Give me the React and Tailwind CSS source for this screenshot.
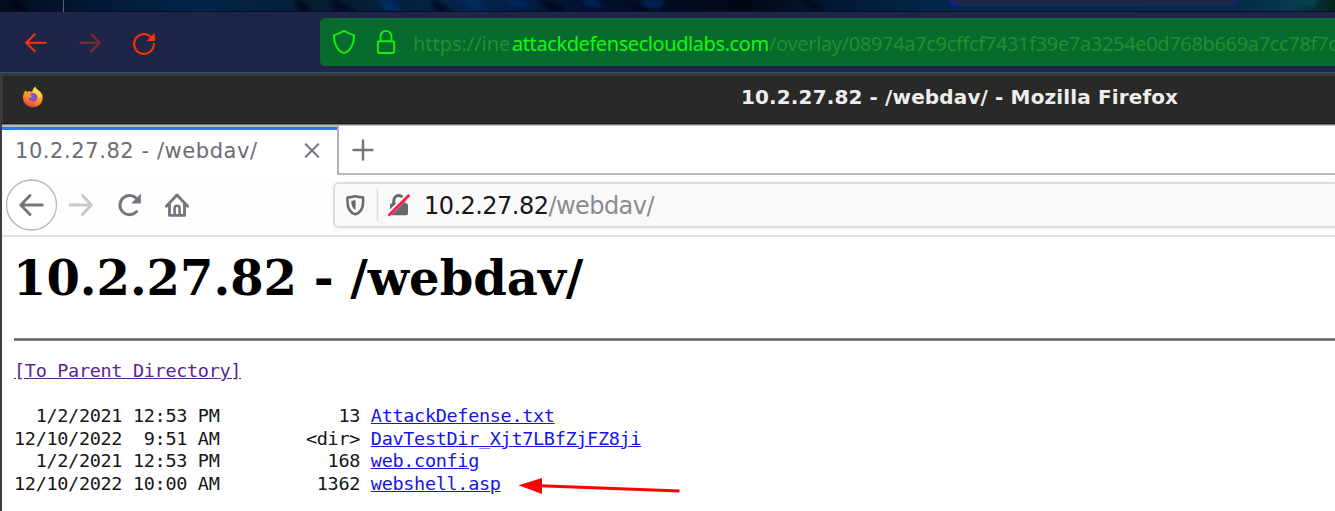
import React from "react";

const rows = [
  ["  1/2/2021 12:53 PM           13 ", "AttackDefense.txt"],
  ["12/10/2022  9:51 AM        <dir> ", "DavTestDir_Xjt7LBfZjFZ8ji"],
  ["  1/2/2021 12:53 PM          168 ", "web.config"],
  ["12/10/2022 10:00 AM         1362 ", "webshell.asp"],
];

function Wallpaper() {
  return (
    <svg width="1335" height="12" viewBox="0 0 1335 12" className="absolute inset-0" preserveAspectRatio="none">
      <defs>
        <linearGradient id="wall">
          <stop offset="0" stopColor="#020b1c" />
          <stop offset="0.07" stopColor="#031a35" />
          <stop offset="0.15" stopColor="#03244a" />
          <stop offset="0.25" stopColor="#051d32" />
          <stop offset="0.36" stopColor="#04244d" />
          <stop offset="0.46" stopColor="#010e28" />
          <stop offset="0.56" stopColor="#010714" />
          <stop offset="0.63" stopColor="#031a38" />
          <stop offset="0.7" stopColor="#02264a" />
          <stop offset="0.93" stopColor="#052b45" />
          <stop offset="0.97" stopColor="#073a4c" />
          <stop offset="1" stopColor="#03231e" />
        </linearGradient>
        <filter id="soft"><feGaussianBlur stdDeviation="2" /></filter>
      </defs>
      <rect width="1335" height="12" fill="url(#wall)" />
      <g filter="url(#soft)">
        <path d="M8 0h9l12 12h-12zM293 0h10l9 12h-12zM330 0h6l22 12h-20zM430 0h8l14 12h-16zM540 0h12l15 12h-18zM645 0h12l-10 12h-16zM800 0h10l16 12h-8z" fill="#010812" opacity="0.7" />
        <path d="M375 0h18l10 12h-15zM455 0h20l12 9-14-3zM505 0h16l10 7-15-1zM580 0h14l12 7-16-1zM640 0h26l-8 9-13-3z" fill="#06337c" opacity="0.65" />
        <path d="M1295 0h25l-8 6z" fill="#08566a" opacity="0.7" />
      </g>
      <path d="M0 11.5h1335" stroke="#041026" />
    </svg>
  );
}

function FirefoxLogo() {
  return (
    <svg width="22" height="22" viewBox="0 0 22 22">
      <defs>
        <linearGradient id="fire" x1="0.8" y1="0" x2="0.35" y2="1">
          <stop offset="0" stopColor="#ffe84a" />
          <stop offset="0.4" stopColor="#ffad2d" />
          <stop offset="0.75" stopColor="#ff7126" />
          <stop offset="1" stopColor="#f0344e" />
        </linearGradient>
      </defs>
      <path d="M3.4 4.2 4.8 6 7 5.3 10.7 6 C10.8 3.5 12 1.8 13.2 .8 C13.6 3 16.3 4 18 5.5 C20 7.5 21 9.5 20.7 12 C20.3 17.5 16.4 21.3 11 21.3 C5.3 21.3 1 17.2 1 11.6 C1 8.7 2 6.5 3.4 4.2Z" fill="url(#fire)" />
      <path d="M10.2 5.9 C10.5 3.5 12 1.6 13.2 .8 C13.6 3 16.8 4 18 6.5 C19 8.5 18.5 11 17.5 12.5 C16.5 9 14.5 7 10.2 7Z" fill="#ffdc44" opacity="0.8" />
      <path d="M7 8.4 C10 5.6 15.3 7.4 15.3 11.5 C15.2 14.8 12.5 16.2 10 15.6 C7.6 15 6.4 13.2 6.6 11.3 C8 12.2 9.4 11.4 9.8 10.3Z" fill="#7b55cf" />
      <path d="M3.6 7.5 C5.7 6 8.2 7.2 9.5 8.7 L7 10.6 C5 10.4 4 9.3 3.6 7.5Z" fill="#ff9830" />
    </svg>
  );
}

function OuterNav() {
  return (
    <div className="flex h-[60px] bg-[#1f2548]">
      <div className="flex w-[320px] shrink-0 items-start">
        <svg width="180" height="60" viewBox="0 12 180 60" fill="none" stroke="#ff3300" strokeWidth="2" strokeLinecap="round" strokeLinejoin="round">
          <path d="M45.7 42.8H26.2M34.8 34.3 26.2 42.8 34.8 51.3" />
          <path d="M80.2 42.8H99.8M91.3 34.3 99.8 42.8 91.3 51.3" stroke="#812a30" />
          <path d="M153.9 43.8A9.9 9.9 0 1 1 149.2 35.6L151.8 38" />
          <path d="M154.4 34.2V40.4H147.8Z" fill="#ff3300" strokeWidth="1.1" />
        </svg>
      </div>
      <div className="mt-[6px] flex h-12 flex-1 overflow-hidden rounded-l-[5px] bg-[#066b2d]">
        <svg className="shrink-0" width="93" height="48" viewBox="320 18 93 48" fill="none" stroke="#13f213" strokeWidth="1.9" strokeLinejoin="round">
          <path d="M344 30.8C340.8 33 337.6 34.5 334 35.1C333.6 43.5 337.5 51.2 344 53.1C350.5 51.2 354.4 43.5 354 35.1C350.4 34.5 347.2 33 344 30.8Z" />
          <rect x="377.8" y="41.2" width="16.4" height="11.8" rx="2" />
          <path d="M380.5 41V36.4a5.5 5.5 0 0 1 11 0V41" />
        </svg>
        <div className="flex pt-px font-['Noto_Sans',sans-serif] text-[20px] leading-[50px] whitespace-pre text-[#1d912d]">
          <span className="w-[99px] tracking-[-0.05px]">https://ine.</span>
          <span className="w-[257px] tracking-[-0.42px] text-[#13f813]">attackdefensecloudlabs.com</span>
          <span className="tracking-[-0.34px]">/overlay/08974a7c9cffcf7431f39e7a3254e0d768b669a7cc78f7c</span>
        </div>
      </div>
    </div>
  );
}

function TitleBar() {
  return (
    <div className="flex h-[51px] items-center border-t-[3px] border-b border-l-[3px] border-t-[#383836] border-b-[#1c1c1b] border-l-[#3b3b39] bg-[#292927] pb-[5px]">
      <div className="ml-[19px] w-[719px] shrink-0"><FirefoxLogo /></div>
      <div className="font-['DejaVu_Sans',sans-serif] text-[20px] font-bold tracking-[0.13px] leading-6 whitespace-nowrap text-[#eeeeec]">
        10.2.27.82 - /webdav/ - Mozilla Firefox
      </div>
    </div>
  );
}

function TabStrip() {
  return (
    <div className="flex h-[51px] border-t border-[#777]">
      <div className="flex w-[337px] shrink-0 flex-col border-r-2 border-t-2 border-r-[#b1b1b3] border-t-[#b9b9bb]">
        <div className="h-[3px] bg-[#2b7af5]" />
        <div className="flex flex-1 items-center justify-between pb-[3px]">
          <span className="ml-[13px] font-['DejaVu_Sans',sans-serif] text-[21px] tracking-[0.57px] leading-[26px] whitespace-nowrap text-[#6b6c76]">10.2.27.82 - /webdav/</span>
          <svg className="mr-4" width="18" height="18" viewBox="0 0 18 18" stroke="#72747e" strokeWidth="2" strokeLinecap="round">
            <path d="M2.7 2.2 15.3 14.8M15.3 2.2 2.7 14.8" />
          </svg>
        </div>
      </div>
      <div className="flex-1 border-t border-b-2 border-t-[#c5c5c7] border-b-[#b8b8ba] pt-[13px] pl-[13px]">
        <svg width="22" height="22" viewBox="0 0 22 22" stroke="#747680" strokeWidth="2.5" strokeLinecap="round">
          <path d="M11 1.5v19M1.5 11h19" />
        </svg>
      </div>
    </div>
  );
}

function InnerNav() {
  return (
    <div className="flex h-[62px] border-b-2 border-[#dededf] bg-[#fefefe]">
      <svg className="shrink-0" width="331" height="59" viewBox="2 175 331 59" fill="none" stroke="#737681" strokeWidth="2.9" strokeLinecap="round" strokeLinejoin="round">
        <circle cx="31.5" cy="205" r="25" stroke="#b6b6b9" strokeWidth="1.3" fill="#fff" />
        <path d="M42.3 205H20.8M30 195.6 20.8 205 30 214.4" />
        <path d="M70 205H91.5M82.3 195.6 91.5 205 82.3 214.4" stroke="#c7c8cc" />
        <path d="M137.5 199.7A9.6 9.6 0 1 0 136.6 211.6" />
        <path d="M140.3 195V203H132.3Z" fill="#737681" strokeWidth="1" />
        <path d="M166.3 206.2 177 195 187.7 206.2M169.5 204V215.4H184.5V204" />
        <path d="M174.6 214V208.2a2.5 2.5 0 0 1 5 0V214" strokeWidth="2.6" />
      </svg>
      <div className="mt-[7px] flex h-[46px] flex-1 rounded-l-[6px] border-2 border-r-0 border-[#dedee0] bg-[#f9f9fa] shadow-[0_1px_4px_rgba(0,0,0,0.06)]">
        <svg className="shrink-0" width="89" height="42" viewBox="335 184 89 42" fill="none">
          <path d="M355.3 196.2C352.8 197.2 350 197.4 347.5 197.4V202C347.5 208 350.3 212.7 355.3 214.2C360.3 212.7 363.1 208 363.1 202V197.4C360.6 197.4 357.8 197.2 355.3 196.2Z" stroke="#68686a" strokeWidth="2.5" strokeLinejoin="round" />
          <path d="M355.5 200V210C352.5 208.5 351.2 205 351.2 201Z" fill="#68686a" />
          <path d="M377.5 188.5V221" stroke="#dedee0" strokeWidth="1.5" />
          <path d="M393.8 205V200.5a5 5 0 0 1 10 0V205" stroke="#68686a" strokeWidth="3" />
          <rect x="390" y="203.2" width="18" height="12" rx="2" fill="#68686a" />
          <path d="M388.7 214.2 408 195" stroke="#f9f9fa" strokeWidth="5" />
          <path d="M389.5 214.8 408.5 195.8" stroke="#ff1748" strokeWidth="2.9" strokeLinecap="round" />
        </svg>
        <div className="pt-px font-['DejaVu_Sans',sans-serif] text-[24px] tracking-[-0.54px] leading-[42px] whitespace-nowrap text-[#8c8c8e]">
          <span className="text-[#17171a]">10.2.27.82</span>/webdav/
        </div>
      </div>
    </div>
  );
}

function Directory() {
  return (
    <div className="relative flex-1 overflow-hidden pl-3">
      <h1 className="-ml-px pt-[11px] font-['DejaVu_Serif',serif] text-[48px] font-bold leading-[60px] whitespace-nowrap text-black">10.2.27.82 - /webdav/</h1>
      <div className="mt-[30px] h-[3px] border-t border-b border-y-[#858785] bg-[#5d5f5d]" />
      <pre className="mt-[19px] -ml-px pl-px font-['DejaVu_Sans_Mono',monospace] text-[18.5px] tracking-[-0.325px] leading-[22.5px] text-[#151515]">
        <a className="text-[#5b2590] underline">[To Parent Directory]</a>{"\n\n"}
        {rows.map(([meta, name]) => (
          <React.Fragment key={name}>
            {meta}
            <a className="text-[#1515e8] underline">{name}</a>
            {"\n"}
          </React.Fragment>
        ))}
      </pre>
      <svg className="absolute top-[238px] left-[514px]" width="168" height="24" viewBox="516 475 168 24">
        <path d="M540 485.8 679.5 491" stroke="#f00" strokeWidth="3" />
        <path d="M518.5 485.2 542 478V494Z" fill="#f00" />
      </svg>
    </div>
  );
}

export default function App() {
  return (
    <div className="flex h-[511px] w-[1335px] flex-col overflow-hidden bg-white">
      <div className="relative h-3 shrink-0">
        <Wallpaper />
        <div className="absolute top-0 left-[63px] h-3 w-px bg-[#52647c]" />
        <div className="absolute top-0 left-[950px] h-[6px] w-[286px] rounded-b-[5px] border border-t-0 border-[#0c12ec] bg-[#1f2548]" />
      </div>
      <OuterNav />
      <div className="h-px shrink-0 bg-[#2c5778]" />
      <TitleBar />
      <div className="flex flex-1 flex-col border-l-2 border-[#3d3d40]">
        <TabStrip />
        <InnerNav />
        <Directory />
      </div>
    </div>
  );
}
